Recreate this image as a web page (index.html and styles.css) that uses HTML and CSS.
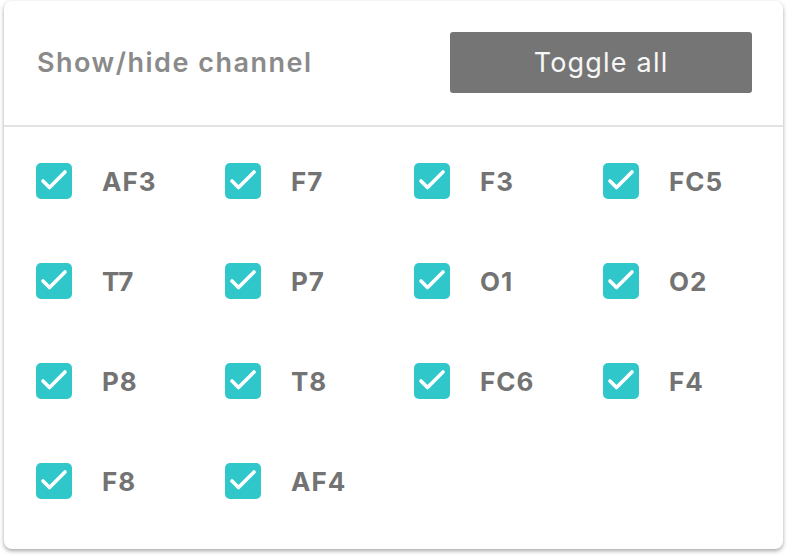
FILE: index.html
```html
<!DOCTYPE html>
<html>
<head>
<meta charset="utf-8">
<link rel="stylesheet" href="styles.css">
</head>
<body>
<div class="card">
  <div class="header">
    <div class="title">Show/hide channel</div>
    <button class="toggle">Toggle all</button>
  </div>
  <div class="grid">
    <label class="item"><span class="box"><svg viewBox="0 0 36 36"><path d="M7 18 L13.5 24.5 L29 9"/></svg></span><span class="name">AF3</span></label>
    <label class="item"><span class="box"><svg viewBox="0 0 36 36"><path d="M7 18 L13.5 24.5 L29 9"/></svg></span><span class="name">F7</span></label>
    <label class="item"><span class="box"><svg viewBox="0 0 36 36"><path d="M7 18 L13.5 24.5 L29 9"/></svg></span><span class="name">F3</span></label>
    <label class="item"><span class="box"><svg viewBox="0 0 36 36"><path d="M7 18 L13.5 24.5 L29 9"/></svg></span><span class="name">FC5</span></label>
    <label class="item"><span class="box"><svg viewBox="0 0 36 36"><path d="M7 18 L13.5 24.5 L29 9"/></svg></span><span class="name">T7</span></label>
    <label class="item"><span class="box"><svg viewBox="0 0 36 36"><path d="M7 18 L13.5 24.5 L29 9"/></svg></span><span class="name">P7</span></label>
    <label class="item"><span class="box"><svg viewBox="0 0 36 36"><path d="M7 18 L13.5 24.5 L29 9"/></svg></span><span class="name">O1</span></label>
    <label class="item"><span class="box"><svg viewBox="0 0 36 36"><path d="M7 18 L13.5 24.5 L29 9"/></svg></span><span class="name">O2</span></label>
    <label class="item"><span class="box"><svg viewBox="0 0 36 36"><path d="M7 18 L13.5 24.5 L29 9"/></svg></span><span class="name">P8</span></label>
    <label class="item"><span class="box"><svg viewBox="0 0 36 36"><path d="M7 18 L13.5 24.5 L29 9"/></svg></span><span class="name">T8</span></label>
    <label class="item"><span class="box"><svg viewBox="0 0 36 36"><path d="M7 18 L13.5 24.5 L29 9"/></svg></span><span class="name">FC6</span></label>
    <label class="item"><span class="box"><svg viewBox="0 0 36 36"><path d="M7 18 L13.5 24.5 L29 9"/></svg></span><span class="name">F4</span></label>
    <label class="item"><span class="box"><svg viewBox="0 0 36 36"><path d="M7 18 L13.5 24.5 L29 9"/></svg></span><span class="name">F8</span></label>
    <label class="item"><span class="box"><svg viewBox="0 0 36 36"><path d="M7 18 L13.5 24.5 L29 9"/></svg></span><span class="name">AF4</span></label>
  </div>
</div>
</body>
</html>
```
FILE: styles.css
```css
html, body {
  margin: 0;
  padding: 0;
  background: #ffffff;
}
body {
  font-family: Inter, "DejaVu Sans", sans-serif;
  width: 794px;
  height: 556px;
  overflow: hidden;
}
.card {
  margin: 1px 0 0 4px;
  width: 779px;
  height: 548px;
  box-sizing: border-box;
  background: #fff;
  border-radius: 8px;
  box-shadow: 0 2px 4px rgba(0, 0, 0, 0.35);
}
.header {
  height: 126px;
  box-sizing: border-box;
  display: flex;
  align-items: center;
  justify-content: space-between;
  padding: 0 31px 2px 33px;
  border-bottom: 2px solid #e2e2e2;
}
.title {
  font-size: 27px;
  font-weight: 600;
  color: #8a8a8a;
  letter-spacing: 1.5px;
}
.toggle {
  width: 302px;
  height: 61px;
  border: 0;
  border-radius: 3px;
  background: #757575;
  color: #f7f7f7;
  font-family: inherit;
  font-size: 27px;
  font-weight: 400;
  letter-spacing: 1.2px;
}
.grid {
  display: grid;
  grid-template-columns: repeat(4, 189px);
  grid-auto-rows: 100px;
  padding: 36px 0 0 32px;
}
.item {
  display: flex;
  align-items: flex-start;
  gap: 30px;
}
.box {
  width: 36px;
  height: 36px;
  border-radius: 5px;
  background: #30c7ca;
  flex: none;
}
.box svg {
  display: block;
  width: 36px;
  height: 36px;
  fill: none;
  stroke: #fff;
  stroke-width: 3.6;
  stroke-linecap: round;
  stroke-linejoin: round;
}
.name {
  font-size: 26px;
  font-weight: 700;
  color: #737373;
  line-height: 36px;
  padding-top: 1px;
  letter-spacing: 1px;
}
```
